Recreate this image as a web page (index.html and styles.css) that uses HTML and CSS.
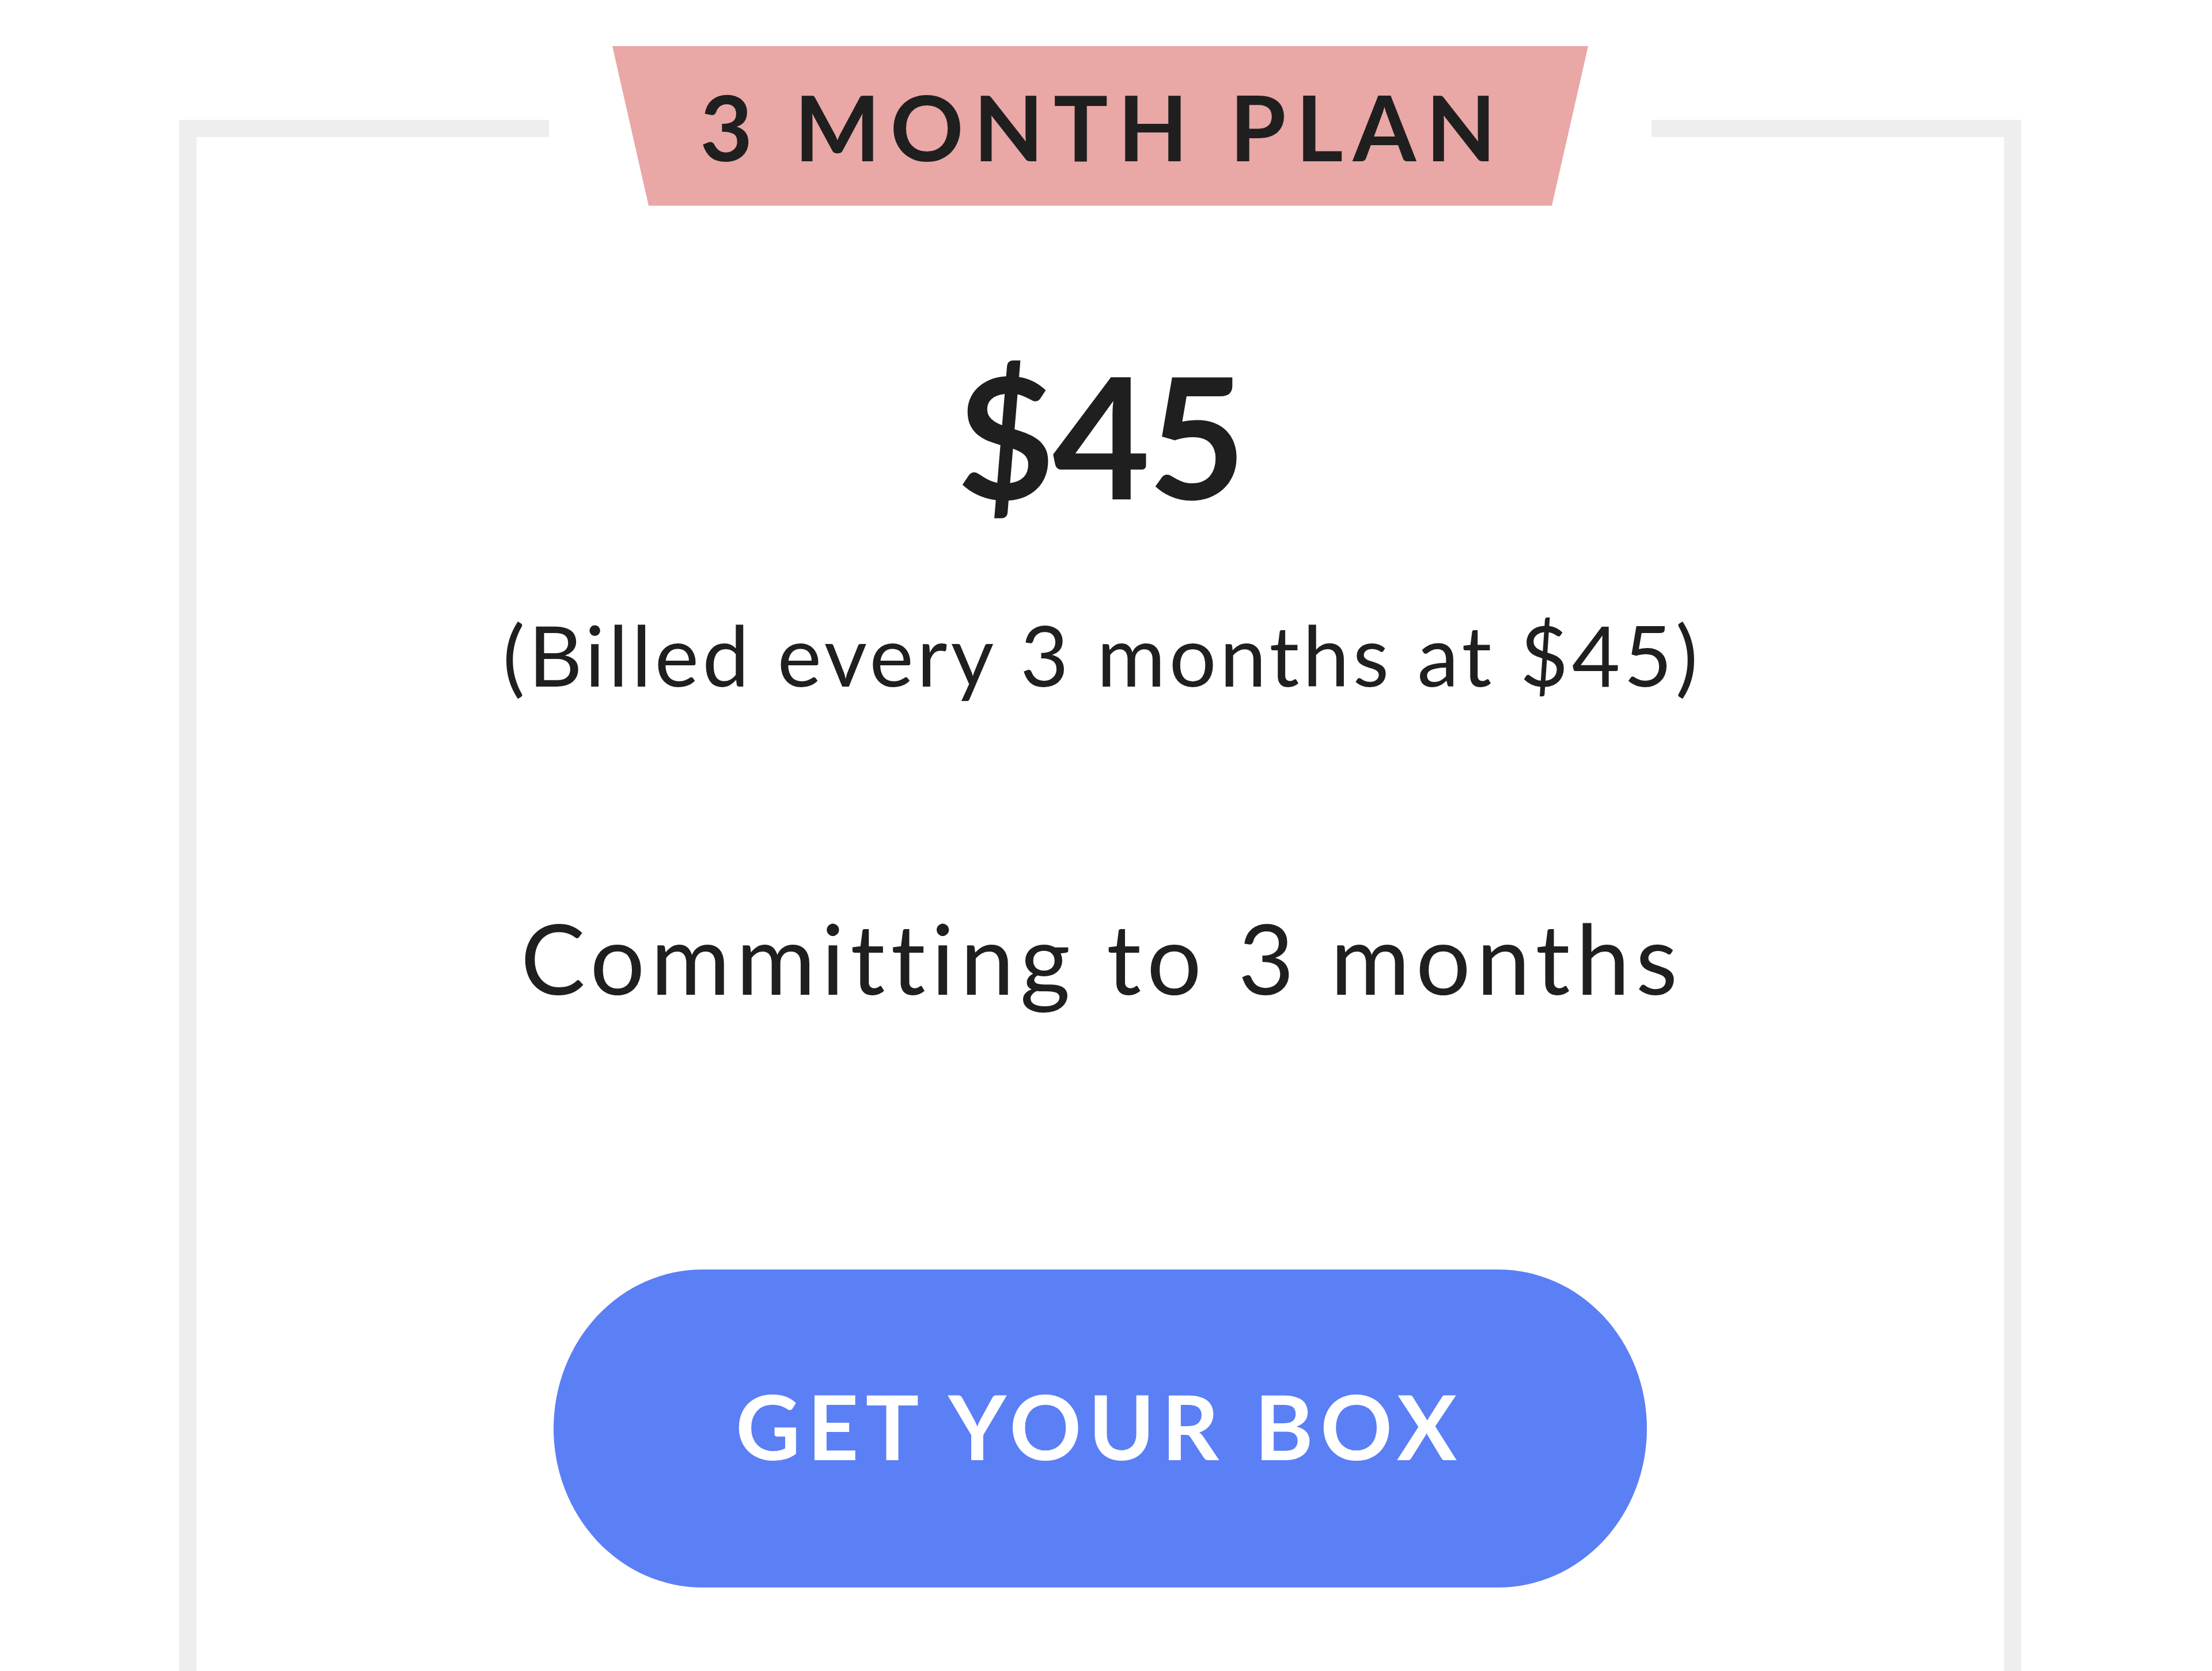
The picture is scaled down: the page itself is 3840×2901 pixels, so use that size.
FILE: index.html
```html
<!DOCTYPE html>
<html lang="en">
<head>
<meta charset="utf-8">
<title>3 Month Plan</title>
<link rel="stylesheet" href="styles.css">
</head>
<body>
<fieldset class="plan-card">
  <legend class="plan-legend">
    <div class="plan-badge"><span class="plan-badge-text">3 MONTH PLAN</span></div>
  </legend>
  <div class="plan-body">
    <div class="plan-price">$45</div>
    <div class="plan-billing">(Billed every 3 months at $45)</div>
    <div class="plan-commit">Committing to 3 months</div>
    <a class="plan-button" href="#"><span class="plan-button-text">GET YOUR BOX</span></a>
  </div>
</fieldset>
</body>
</html>
```

FILE: styles.css
```css
html, body {
  margin: 0;
  padding: 0;
  background: #ffffff;
  height: 2901px;
  overflow: hidden;
}

body {
  font-family: "Lato", "Open Sans", sans-serif;
  color: #1f1f1f;
}

.plan-card {
  box-sizing: border-box;
  margin: 80px 331px 0 311px;
  border: 30px solid #eeeeee;
  padding: 241px 0 0;
  min-width: 0;
  height: 3200px;
}

.plan-legend {
  margin: 0 auto;
  padding: 0 110px 9px;
}

.plan-badge {
  width: 1694px;
  height: 277px;
  background: #e9a7a6;
  clip-path: polygon(0 0, 100% 0, calc(100% - 63px) 100%, 63px 100%);
  display: flex;
  align-items: center;
  justify-content: center;
}

.plan-badge-text {
  font-size: 158px;
  line-height: 1;
  font-weight: 700;
  letter-spacing: 17px;
  margin-right: -9px;
  color: #1f1f1f;
}

.plan-body {
  display: flex;
  flex-direction: column;
  align-items: center;
}

.plan-price {
  font-size: 293px;
  line-height: 1;
  font-weight: 700;
  letter-spacing: -4px;
}

.plan-billing {
  margin-top: 164px;
  font-size: 145px;
  line-height: 1;
  font-weight: 400;
  letter-spacing: 6px;
  margin-right: -6px;
}

.plan-commit {
  margin-top: 369px;
  font-size: 168px;
  line-height: 1;
  font-weight: 400;
  letter-spacing: 10px;
  margin-right: -6px;
}

.plan-button {
  margin-top: 458px;
  box-sizing: border-box;
  width: 1898px;
  height: 552px;
  padding-bottom: 9px;
  border-radius: 258px / 276px;
  background: #5b7ff5;
  display: flex;
  align-items: center;
  justify-content: center;
  text-decoration: none;
}

.plan-button-text {
  font-size: 155px;
  line-height: 1;
  font-weight: 700;
  letter-spacing: 12px;
  margin-right: 2px;
  color: #ffffff;
}
```
